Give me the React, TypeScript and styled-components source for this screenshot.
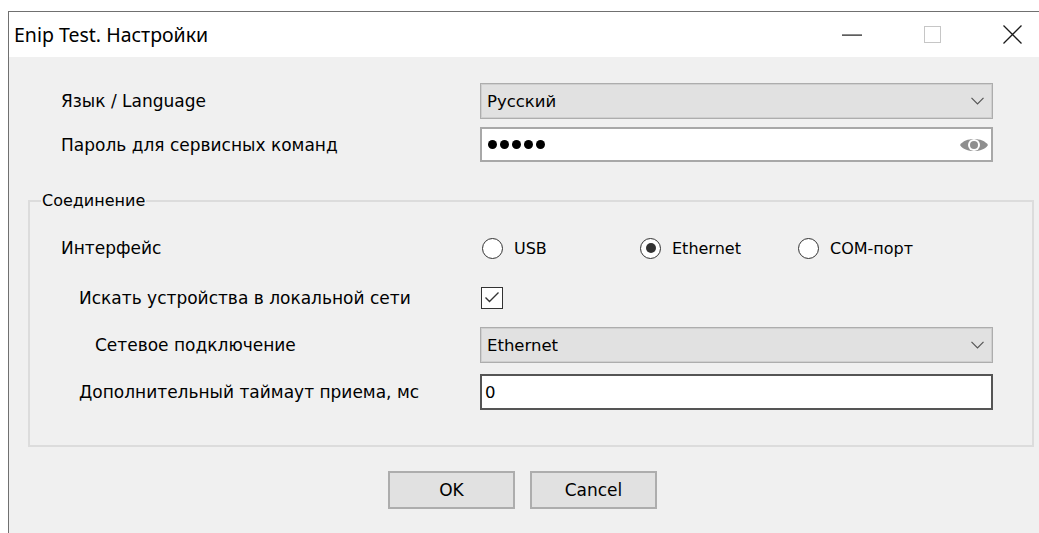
import React from "react";
import styled, { createGlobalStyle } from "styled-components";

const GlobalStyle = createGlobalStyle`
  html, body {
    margin: 0;
    padding: 0;
    background: #ffffff;
    overflow: hidden;
  }
  body {
    font-family: "DejaVu Sans", "Liberation Sans", sans-serif;
    color: #000;
  }
`;

const Window = styled.div`
  margin: 11px 0 0 8px;
  width: 1043px;
  height: 522px;
  border-top: 1px solid #707070;
  border-left: 1px solid #707070;
  background: #f0f0f0;
  display: flex;
  flex-direction: column;
`;

const TitleBar = styled.div`
  height: 45px;
  background: #ffffff;
  display: flex;
  align-items: center;
`;

const Title = styled.div`
  flex: 1;
  padding-left: 5px;
  font-family: "Noto Sans", "Open Sans", sans-serif;
  font-size: 19.5px;
  color: #000;
`;

const TitleButton = styled.div`
  width: 80px;
  height: 45px;
  display: flex;
  align-items: center;
  justify-content: center;
`;

const Body = styled.div`
  flex: 1;
  display: flex;
  flex-direction: column;
  padding: 26px 18px 0 19px;
`;

const TopFields = styled.div`
  display: flex;
  flex-direction: column;
  gap: 8px;
  padding-left: 2px;
`;

const Row = styled.div<{ $height: number; $gap?: number }>`
  display: grid;
  grid-template-columns: 450px 513px;
  align-items: center;
  height: ${(p) => p.$height}px;
  margin-top: ${(p) => p.$gap ?? 0}px;
`;

const Label = styled.div<{ $indent: number }>`
  padding-left: ${(p) => p.$indent}px;
  font-size: 17px;
  white-space: nowrap;
`;

const Combo = styled.div`
  height: 100%;
  box-sizing: border-box;
  border: 1px solid #adadad;
  box-shadow: inset 0 0 0 1px #cfcfcf;
  background: #e1e1e1;
  display: flex;
  align-items: center;
  padding: 0 8px 0 6px;
  font-size: 16.5px;
  justify-content: space-between;
`;

const TextBox = styled.div<{ $dark?: boolean }>`
  height: 100%;
  box-sizing: border-box;
  border: 2px solid ${(p) => (p.$dark ? "#555555" : "#a8a8a8")};
  background: #ffffff;
  display: flex;
  align-items: center;
  padding: 0 2px 0 3px;
  font-size: 16.5px;
  justify-content: space-between;
`;

const Dots = styled.div`
  display: flex;
  gap: 3px;
  padding-left: 3px;
`;

const Dot = styled.span`
  width: 9px;
  height: 9px;
  border-radius: 50%;
  background: #000;
`;

const Group = styled.fieldset`
  margin: 30px 0 0 0;
  border: 2px solid #dcdcdc;
  padding: 0 0 35px 0;
  min-inline-size: 0;
`;

const Legend = styled.legend`
  margin-left: 11px;
  padding: 0 1px;
  font-size: 16px;
  line-height: 18px;
`;

const GroupFields = styled.div`
  display: flex;
  flex-direction: column;
  padding-top: 27px;
`;

const Radios = styled.div`
  display: flex;
  align-items: center;
`;

const RadioItem = styled.label`
  width: 158px;
  display: flex;
  align-items: center;
  gap: 11px;
  font-size: 16px;
  padding-left: 2px;
  box-sizing: border-box;
`;

const RadioCircle = styled.span<{ $checked?: boolean }>`
  width: 19px;
  height: 19px;
  border: 1.5px solid #333333;
  border-radius: 50%;
  background: #ffffff;
  display: flex;
  align-items: center;
  justify-content: center;
  &::after {
    content: "";
    width: 10px;
    height: 10px;
    border-radius: 50%;
    background: ${(p) => (p.$checked ? "#333333" : "transparent")};
  }
`;

const CheckBox = styled.span`
  width: 20px;
  height: 20px;
  margin-left: 1px;
  border: 1.5px solid #333333;
  background: #ffffff;
  display: flex;
  align-items: center;
  justify-content: center;
`;

const Footer = styled.div`
  display: flex;
  justify-content: center;
  gap: 15px;
  margin-top: 24px;
  padding-right: 17px;
`;

const Button = styled.div`
  width: 127px;
  height: 38px;
  box-sizing: border-box;
  border: 2px solid #adadad;
  background: #e1e1e1;
  display: flex;
  align-items: center;
  justify-content: center;
  font-size: 17px;
`;

const Chevron = () => (
  <svg width="13" height="8" viewBox="0 0 13 8">
    <polyline points="0.5,0.8 6.5,6.8 12.5,0.8" fill="none" stroke="#555" strokeWidth="1.2" />
  </svg>
);

const EyeIcon = () => (
  <svg width="30" height="18" viewBox="0 0 30 18">
    <path d="M1 9 C6 1 24 1 29 9 C24 17 6 17 1 9 Z" fill="#8f8f8f" />
    <circle cx="15" cy="9" r="6" fill="#ffffff" />
    <circle cx="15" cy="9" r="4" fill="#8f8f8f" />
  </svg>
);

const App: React.FC = () => {
  return (
    <>
      <GlobalStyle />
      <Window>
        <TitleBar>
          <Title>Enip Test. Настройки</Title>
          <TitleButton>
            <svg width="20" height="2" viewBox="0 0 20 2">
              <rect x="0" y="0.5" width="20" height="1.2" fill="#1a1a1a" />
            </svg>
          </TitleButton>
          <TitleButton>
            <svg width="17" height="17" viewBox="0 0 17 17">
              <rect x="0.5" y="0.5" width="16" height="16" fill="none" stroke="#c6c6c6" strokeWidth="1" />
            </svg>
          </TitleButton>
          <TitleButton>
            <svg width="19" height="19" viewBox="0 0 19 19">
              <path d="M0.5 0.5 L18.5 18.5 M18.5 0.5 L0.5 18.5" stroke="#1a1a1a" strokeWidth="1.3" />
            </svg>
          </TitleButton>
        </TitleBar>

        <Body>
          <TopFields>
            <Row $height={36}>
              <Label $indent={31}>Язык / Language</Label>
              <Combo>
                <span>Русский</span>
                <Chevron />
              </Combo>
            </Row>
            <Row $height={35}>
              <Label $indent={31}>Пароль для сервисных команд</Label>
              <TextBox>
                <Dots>
                  {[0, 1, 2, 3, 4].map((i) => (
                    <Dot key={i} />
                  ))}
                </Dots>
                <EyeIcon />
              </TextBox>
            </Row>
          </TopFields>

          <Group>
            <Legend>Соединение</Legend>
            <GroupFields>
              <Row $height={22}>
                <Label $indent={31}>Интерфейс</Label>
                <Radios>
                  <RadioItem>
                    <RadioCircle />
                    USB
                  </RadioItem>
                  <RadioItem>
                    <RadioCircle $checked />
                    Ethernet
                  </RadioItem>
                  <RadioItem>
                    <RadioCircle />
                    COM-порт
                  </RadioItem>
                </Radios>
              </Row>
              <Row $height={23} $gap={27}>
                <Label $indent={49}>Искать устройства в локальной сети</Label>
                <div>
                  <CheckBox>
                    <svg width="16" height="13" viewBox="0 0 16 13">
                      <polyline points="1.5,6.5 5.5,10.5 14.5,1.5" fill="none" stroke="#333" strokeWidth="1.4" />
                    </svg>
                  </CheckBox>
                </div>
              </Row>
              <Row $height={36} $gap={18}>
                <Label $indent={65}>Сетевое подключение</Label>
                <Combo>
                  <span>Ethernet</span>
                  <Chevron />
                </Combo>
              </Row>
              <Row $height={36} $gap={11}>
                <Label $indent={49}>Дополнительный таймаут приема, мс</Label>
                <TextBox $dark>
                  <span>0</span>
                </TextBox>
              </Row>
            </GroupFields>
          </Group>

          <Footer>
            <Button>OK</Button>
            <Button>Cancel</Button>
          </Footer>
        </Body>
      </Window>
    </>
  );
};

export default App;
